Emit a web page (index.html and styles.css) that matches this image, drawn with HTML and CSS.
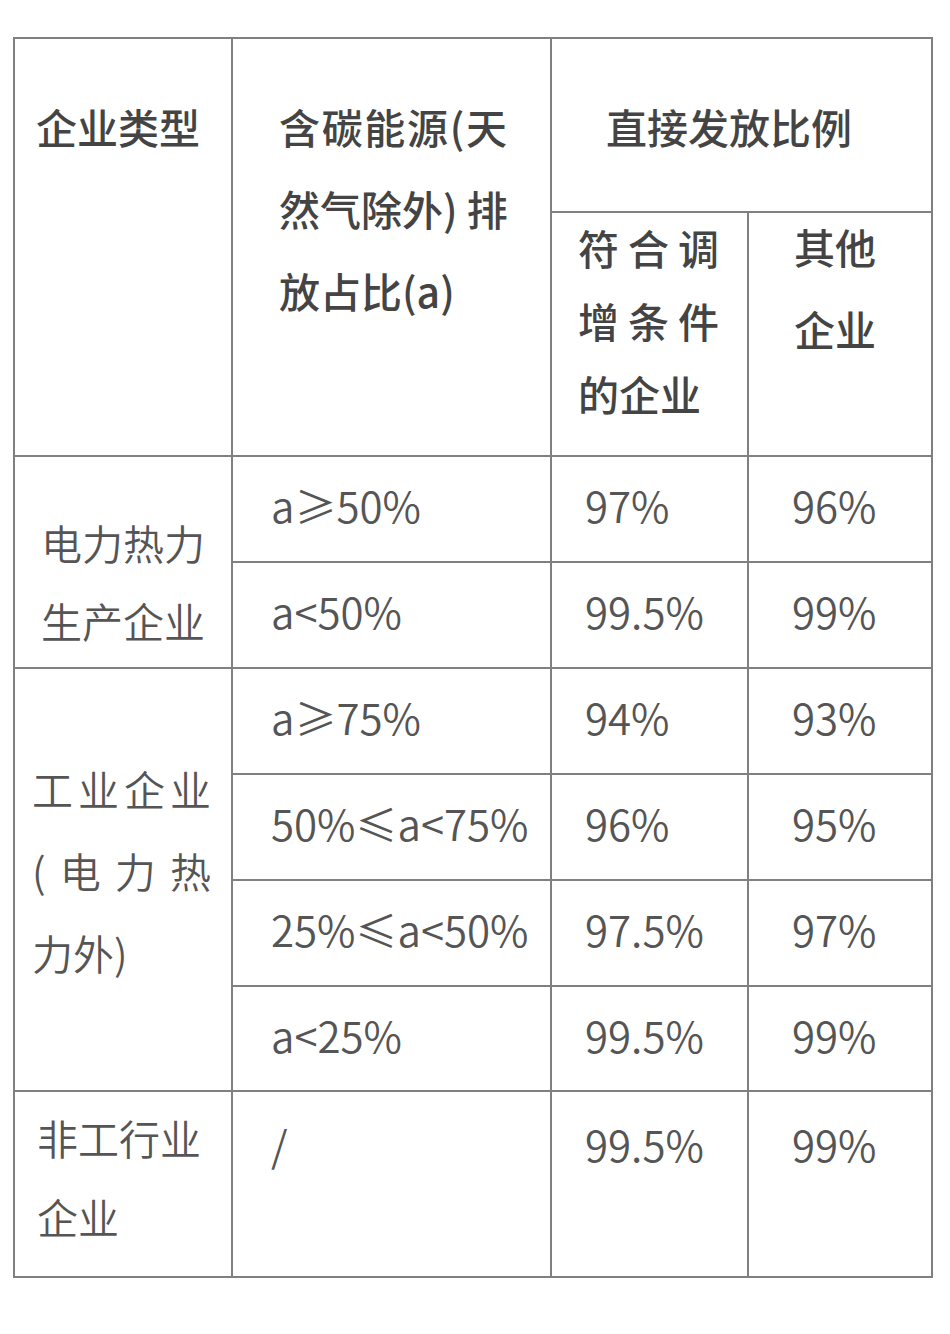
FILE: index.html
```html
<!DOCTYPE html>
<html lang="zh-CN">
<head>
<meta charset="utf-8">
<title>直接发放比例</title>
<link rel="stylesheet" href="styles.css">
</head>
<body>
<div class="page">
  <div class="table">
    <div class="cell head h-type"><span class="ln">企业类型</span></div>
    <div class="cell head h-share">
      <span class="ln fill">含碳能源(天</span>
      <span class="ln fill">然气除外) 排</span>
      <span class="ln">放占比(a)</span>
    </div>
    <div class="cell head h-ratio"><span class="ln">直接发放比例</span></div>
    <div class="cell head h-ok">
      <span class="ln fill">符合调</span>
      <span class="ln fill">增条件</span>
      <span class="ln">的企业</span>
    </div>
    <div class="cell head h-other">
      <span class="ln">其他</span>
      <span class="ln">企业</span>
    </div>

    <div class="cell type t-power">
      <span class="ln">电力热力</span>
      <span class="ln">生产企业</span>
    </div>
    <div class="cell num c2">a≥50%</div>
    <div class="cell num c3">97%</div>
    <div class="cell num c4">96%</div>
    <div class="cell num c2">a&lt;50%</div>
    <div class="cell num c3">99.5%</div>
    <div class="cell num c4">99%</div>

    <div class="cell type t-ind">
      <span class="ln fill">工业企业</span>
      <span class="ln fill">(电力热</span>
      <span class="ln">力外)</span>
    </div>
    <div class="cell num c2">a≥75%</div>
    <div class="cell num c3">94%</div>
    <div class="cell num c4">93%</div>
    <div class="cell num c2">50%≤a&lt;75%</div>
    <div class="cell num c3">96%</div>
    <div class="cell num c4">95%</div>
    <div class="cell num c2">25%≤a&lt;50%</div>
    <div class="cell num c3">97.5%</div>
    <div class="cell num c4">97%</div>
    <div class="cell num c2">a&lt;25%</div>
    <div class="cell num c3">99.5%</div>
    <div class="cell num c4">99%</div>

    <div class="cell type t-non">
      <span class="ln">非工行业</span>
      <span class="ln">企业</span>
    </div>
    <div class="cell num top c2">/</div>
    <div class="cell num top c3">99.5%</div>
    <div class="cell num top c4">99%</div>
  </div>
</div>
</body>
</html>
```

FILE: styles.css
```css
html, body {
  margin: 0;
  padding: 0;
  background: #ffffff;
}

body {
  font-family: "Noto Sans CJK SC", "Noto Sans", sans-serif;
  color: #555555;
}

.page {
  padding: 37px 0 0 13px;
}

.table {
  display: grid;
  grid-template-columns: 216px 317px 195px 182px;
  grid-template-rows: 172px 242px 104px 104px 104px 104px 104px 103px 184px;
  gap: 2px;
  padding: 2px;
  width: max-content;
  background: #808080;
}

.cell {
  background: #ffffff;
  display: flex;
  flex-direction: column;
  font-size: 41px;
  line-height: 44px;
  box-sizing: border-box;
}

.ln {
  display: block;
  white-space: nowrap;
}

.ln.fill {
  text-align: justify;
  text-align-last: justify;
}

/* header */
.head {
  color: #444444;
  font-weight: 500;
}

.h-type {
  grid-row: span 2;
  padding: 65px 0 0 21px;
}

.h-share {
  grid-row: span 2;
  padding: 65px 43px 0 46px;
  gap: 38px;
}

.h-ratio {
  grid-column: span 2;
  padding: 65px 0 0 54px;
}

.h-ok {
  padding: 12px 28px 0 26px;
  gap: 29px;
}

.h-other {
  padding: 11px 0 0 45px;
  gap: 38px;
}

/* type column */
.type {
  font-weight: 350;
}

.t-power {
  grid-row: span 2;
  padding: 63px 0 0 26px;
  gap: 34px;
}

.t-ind {
  grid-row: span 4;
  padding: 97px 20px 0 17px;
  gap: 38px;
}

.t-non {
  padding: 23px 0 0 22px;
  gap: 35px;
}

/* value cells */
.num {
  font-size: 42px;
  font-weight: 350;
  justify-content: center;
  padding-bottom: 8px;
  white-space: nowrap;
}

.num.top {
  justify-content: flex-start;
  padding-top: 30px;
  padding-bottom: 0;
}

.c2 { padding-left: 38px; }
.c3 { padding-left: 33px; }
.c4 { padding-left: 43px; }
```
